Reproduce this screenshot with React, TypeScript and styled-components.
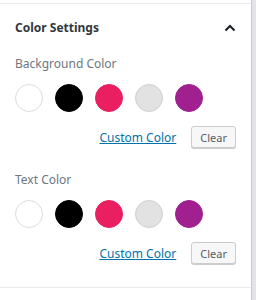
import styled, { createGlobalStyle } from 'styled-components';

const Global = createGlobalStyle`
  html, body {
    margin: 0;
    padding: 0;
    background: #fff;
  }
  body {
    font-family: "Noto Sans", "Open Sans", sans-serif;
    color: #191e23;
  }
`;

const swatches = ['#ffffff', '#000000', '#ea1f61', '#e2e2e2', '#a1208f'];

type SwatchProps = { $color: string };

const ColorGroup = ({ label }: { label: string }) => (
  <Group>
    <Label>{label}</Label>
    <Swatches>
      {swatches.map((c) => (
        <Swatch key={c} $color={c} />
      ))}
    </Swatches>
    <Actions>
      <CustomLink href="#">Custom Color</CustomLink>
      <ClearButton>Clear</ClearButton>
    </Actions>
  </Group>
);

export default function App() {
  return (
    <>
      <Global />
      <Page>
        <Panel>
          <Header>
            <Title>Color Settings</Title>
            <Chevron viewBox="0 0 12 8">
              <path d="M1.5 6.5 L6 2 L10.5 6.5" fill="none" stroke="#191e23" strokeWidth="2" />
            </Chevron>
          </Header>
          <ColorGroup label="Background Color" />
          <ColorGroup label="Text Color" />
        </Panel>
        <Gutter />
      </Page>
    </>
  );
}

const Page = styled.div`
  display: flex;
  width: 256px;
  height: 300px;
  padding-top: 3px;
  box-sizing: border-box;
`;

const Panel = styled.div`
  width: 251px;
  height: 285px;
  box-sizing: border-box;
  border-top: 1px solid #e8eaeb;
  border-bottom: 1px solid #e8eaeb;
  padding: 0 15px;
`;

const Gutter = styled.div`
  width: 5px;
  height: 300px;
  margin-top: -3px;
  background: #e2e4e7;
  border-left: 1px solid #c8ccd0;
  box-sizing: border-box;
`;

const Header = styled.div`
  display: flex;
  align-items: center;
  justify-content: space-between;
  height: 47px;
`;

const Title = styled.h2`
  margin: 0;
  font-size: 12px;
  font-weight: 700;
  color: #32373c;
`;

const Chevron = styled.svg`
  width: 12px;
  height: 8px;
`;

const Group = styled.div`
  display: flex;
  flex-direction: column;
  padding-top: 4px;
  margin-bottom: 19px;
`;

const Label = styled.div`
  font-size: 12px;
  color: #6c7781;
  line-height: 18px;
`;

const Swatches = styled.div`
  display: flex;
  gap: 12px;
  margin-top: 11px;
`;

const Swatch = styled.div<SwatchProps>`
  width: 28px;
  height: 28px;
  border-radius: 50%;
  box-sizing: border-box;
  background: ${(p) => p.$color};
  border: 1px solid
    ${(p) => (p.$color === '#ffffff' ? '#dcdcdc' : p.$color === '#e2e2e2' ? '#cfcfcf' : p.$color)};
`;

const Actions = styled.div`
  display: flex;
  justify-content: flex-end;
  align-items: center;
  gap: 15px;
  margin-top: 14px;
`;

const CustomLink = styled.a`
  font-size: 12px;
  color: #0073aa;
  text-decoration: underline;
`;

const ClearButton = styled.button`
  height: 22px;
  padding: 0 8px;
  font-family: "Noto Sans", "Open Sans", sans-serif;
  font-size: 11px;
  color: #555d66;
  background: #f7f7f7;
  border: 1px solid #cccccc;
  border-radius: 3px;
  box-shadow: 0 1px 0 #cccccc;
`;
